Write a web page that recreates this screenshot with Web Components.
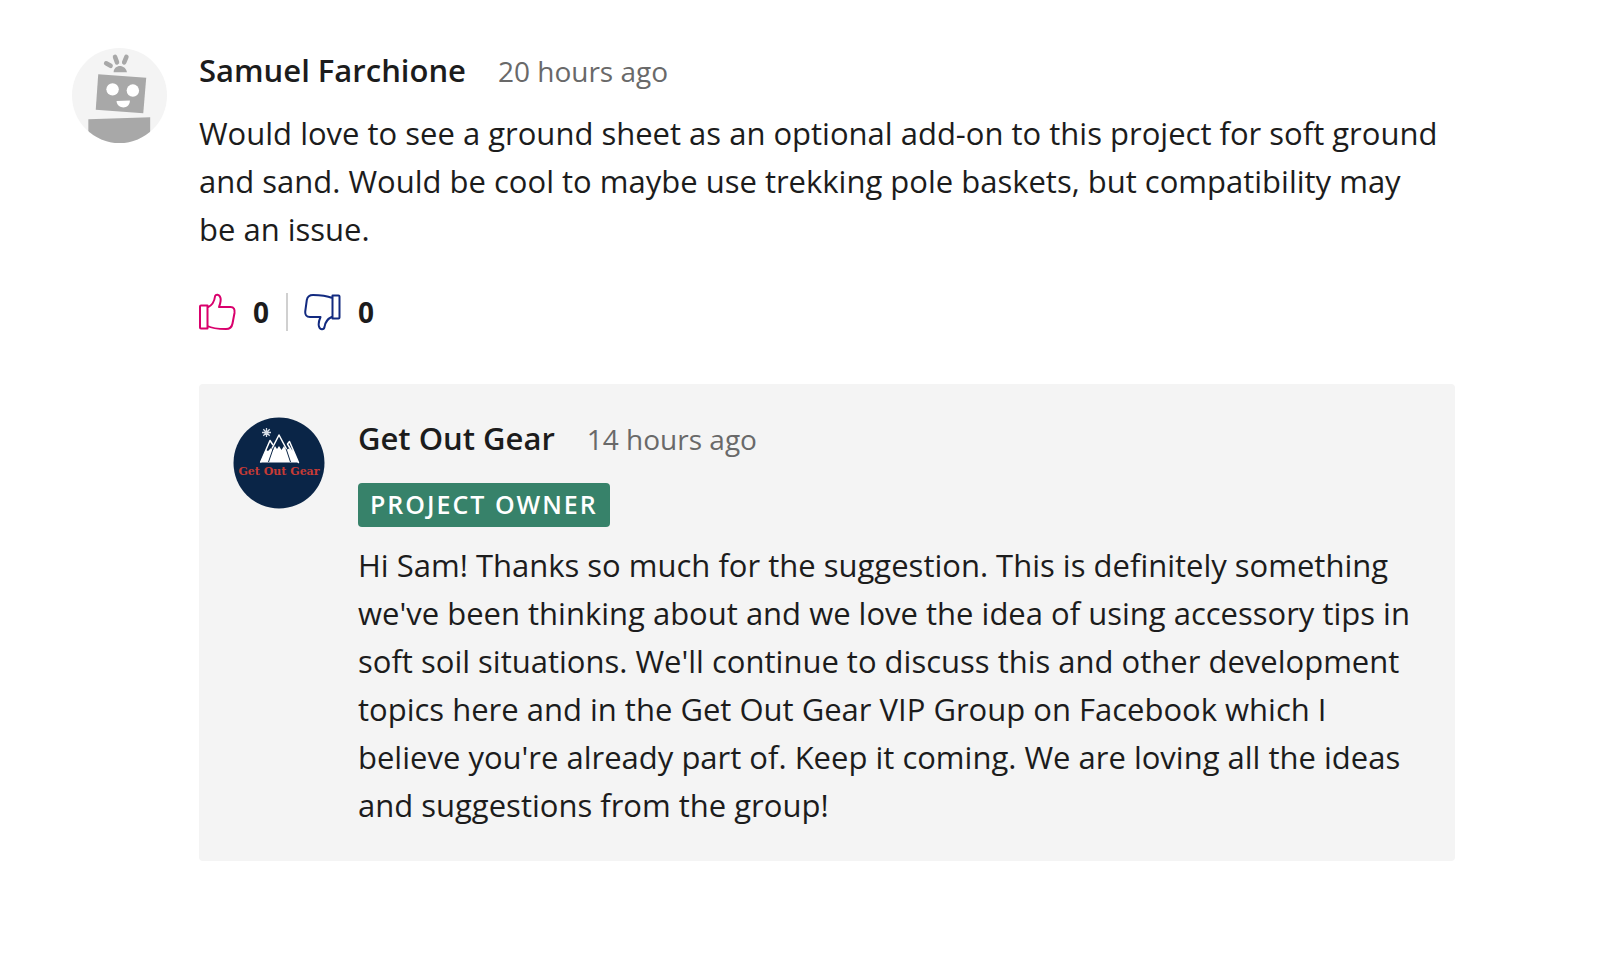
<!DOCTYPE html>
<html lang="en">
<head>
<meta charset="utf-8">
<meta name="viewport" content="width=device-width, initial-scale=1">
<title>Comments</title>
<style>
  body { margin: 0; background: #fff; color: #1c1c1c; font-family: "Open Sans", "Noto Sans", sans-serif; }
</style>
</head>
<body>
<comment-thread>
  <comment-entry>
    <robot-avatar slot="avatar"></robot-avatar>
    <span slot="author">Samuel Farchione</span>
    <time slot="time">20 hours ago</time>
    Would love to see a ground sheet as an optional add-on to this project for soft ground
    and sand. Would be cool to maybe use trekking pole baskets, but compatibility may
    be an issue.
    <comment-votes slot="votes" up="0" down="0"></comment-votes>
    <comment-entry slot="reply" reply>
      <gear-avatar slot="avatar"></gear-avatar>
      <span slot="author">Get Out Gear</span>
      <time slot="time">14 hours ago</time>
      <owner-badge slot="badge">Project Owner</owner-badge>
      Hi Sam! Thanks so much for the suggestion. This is definitely something
      we've been thinking about and we love the idea of using accessory tips in
      soft soil situations. We'll continue to discuss this and other development
      topics here and in the Get Out Gear VIP Group on Facebook which I
      believe you're already part of. Keep it coming. We are loving all the ideas
      and suggestions from the group!
    </comment-entry>
  </comment-entry>
</comment-thread>

<script>
const define = (name, html, setup) => {
  const template = document.createElement('template');
  template.innerHTML = html;
  customElements.define(name, class extends HTMLElement {
    constructor() {
      super();
      this.attachShadow({ mode: 'open' }).append(template.content.cloneNode(true));
    }
    connectedCallback() { if (setup) setup(this, this.shadowRoot); }
  });
};

define('comment-thread', `
  <style>
    :host { display: block; padding: 48px 145px 92px 72px; }
  </style>
  <slot></slot>`);

define('comment-entry', `
  <style>
    :host { display: block; font-size: 31px; line-height: 48px; }
    article { display: grid; grid-template-columns: 95px minmax(0, 1fr); column-gap: 32px; }
    header { display: flex; align-items: baseline; gap: 32px; line-height: 44px; }
    h3 { margin: 0; font-size: 31px; font-weight: 600; }
    .time { font-size: 28px; color: #696969; }
    p { margin: 16px 0 0; padding-right: 10px; }
    :host([reply]) { margin-top: 48px; padding: 32px 32px 32px 34px; background: #f4f4f4; border-radius: 4px; }
    :host([reply]) article { grid-template-columns: 92px minmax(0, 1fr); column-gap: 33px; }
    :host([reply]) p { margin-top: 14px; }
  </style>
  <article>
    <slot name="avatar"></slot>
    <div>
      <header><h3><slot name="author"></slot></h3><span class="time"><slot name="time"></slot></span></header>
      <slot name="badge"></slot>
      <p><slot></slot></p>
      <slot name="votes"></slot>
      <slot name="reply"></slot>
    </div>
  </article>`);

define('robot-avatar', `
  <style>
    :host { display: block; }
    svg { display: block; width: 100%; }
  </style>
  <svg viewBox="0 0 96 96" role="img" aria-label="Robot avatar">
    <defs><clipPath id="disc"><circle cx="48" cy="48" r="48"/></clipPath></defs>
    <circle cx="48" cy="48" r="48" fill="#f4f4f4"/>
    <g clip-path="url(#disc)" fill="#a8a8a8">
      <path d="M16.500 72 79 70 V96 H16.500z"/>
      <path d="M26.500 26.500 75 30 72 66 24 62.500z"/>
      <path d="M42 24.500 C42.500 16 54 16 55.500 24.500z"/>
      <g stroke="#a8a8a8" stroke-width="4.600" stroke-linecap="round">
        <path d="M34.500 15.500 39 18M43.500 9 45.500 14.500M55 9 52.700 14.500"/>
      </g>
      <circle cx="41" cy="41.800" r="6.300" fill="#fff"/>
      <circle cx="61.500" cy="43" r="6.300" fill="#fff"/>
      <path d="M45 53.500 58.500 53C58.500 62.500 45.500 62 45 53.500z" fill="#fff"/>
    </g>
  </svg>`);

define('gear-avatar', `
  <style>
    :host { display: block; margin-top: 1px; }
    svg { display: block; width: 100%; }
    text { font: 700 11px "DejaVu Serif", serif; fill: #c73b35; }
  </style>
  <svg viewBox="0 0 92 92" role="img" aria-label="Get Out Gear">
    <circle cx="46" cy="46" r="45.500" fill="#0a2547"/>
    <path d="M27 45.500 33 33 35 34 38 31 40 33 42 29 44 32 46 29 48.500 33 51 29 53 33 56 31.500 58.500 34 60 33 65.500 45.500z" fill="#fff"/>
    <g fill="none" stroke="#fff" stroke-width="1.500" stroke-linejoin="round">
      <path d="M27.500 45.500 37 23.500 40 28M54.500 27 56.500 24.500 65.500 45.500z"/>
      <path d="M39 31.500 46 18 53.500 32"/>
    </g>
    <path d="M35.500 45 40 32M57.500 45 53.500 33" stroke="#0a2547" stroke-width="1"/>
    <g stroke="#d5dce5" stroke-width="1.300">
      <path d="M33.500 11V20M29 15.500H38M30.300 12.300 36.700 18.700M36.700 12.300 30.300 18.700"/>
    </g>
    <text x="46" y="58" text-anchor="middle">Get Out Gear</text>
  </svg>`);

define('owner-badge', `
  <style>
    :host { display: block; width: max-content; margin-top: 22px; padding: 1px 12px 3px; background: #37826a;
      color: #fff; border-radius: 4px; font-size: 25px; line-height: 40px; font-weight: 600;
      letter-spacing: 2px; text-transform: uppercase; }
  </style>
  <slot></slot>`);

define('comment-votes', `
  <style>
    :host { display: flex; align-items: center; margin-top: 35px; line-height: 48px; }
    button { display: flex; align-items: center; gap: 16px; padding: 0; border: 0; background: none;
      font: 700 28px/48px "Open Sans", sans-serif; color: #1c1c1c; cursor: pointer; }
    svg { width: 38px; height: 38px; fill: none; stroke-width: 2; stroke-linejoin: round; }
    .up { stroke: #d9006c; }
    .down { stroke: #122a80; }
    hr { width: 2px; height: 38px; margin: 0 16px 0 17px; border: 0; background: #d0d0d0; }
  </style>
  <button type="button" aria-label="Like">
    <svg class="up" viewBox="0 0 38 38"><path d="M1 13.500Q1 12.500 2 12.500H8.500V35.500H2Q1 35.500 1 34.500zM8.500 14.500C14 12 15.500 8 16 3.500C16.300 1 20.500 1 21.500 5C22.300 8 21 11 20 14H31.500C35 14 36 16.500 35.500 20L33.500 30.500C32.800 34.500 31 36 27 36C20 36 13 35.500 8.500 33"/></svg>
    <span id="up"></span>
  </button>
  <hr>
  <button type="button" aria-label="Dislike">
    <svg class="down" viewBox="0 0 38 38"><path d="M28.500 2.500H34.500Q35.500 2.500 35.500 3.500V24.500Q35.500 25.500 34.500 25.500H28.500zM28.500 5C22 2.500 16 2 9 2C5 2 3.500 3.500 2.800 7L1.300 18C.800 22 2.500 24 6 24H16.500C15 27.500 14 30.500 15 33.500C16 37 20 37 20.500 34C21 29.500 23 26 28.500 23.500"/></svg>
    <span id="down"></span>
  </button>`, (host, root) => {
  root.getElementById('up').textContent = host.getAttribute('up');
  root.getElementById('down').textContent = host.getAttribute('down');
});
</script>
</body>
</html>
